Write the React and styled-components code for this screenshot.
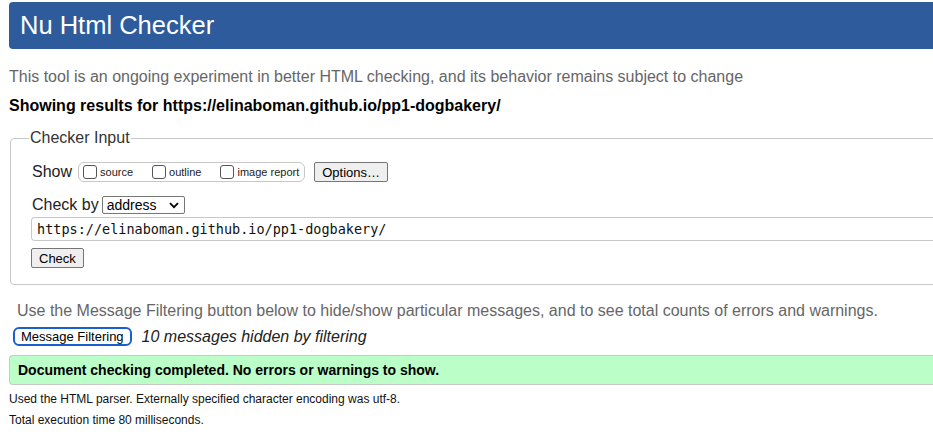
import React from "react";
import styled, { createGlobalStyle } from "styled-components";

const Global = createGlobalStyle`
  html, body { margin: 0; padding: 0; background: #fff; overflow: hidden; }
  body { font-family: "Liberation Sans", Arial, sans-serif; color: #000; }
`;

const Page = styled.div`
  width: 1000px;
  padding: 2px 0 0 9px;
  box-sizing: border-box;
`;

const Header = styled.header`
  background: #2d5b9b;
  border-radius: 4px;
  height: 47px;
  display: flex;
  align-items: center;
  padding-left: 11px;
`;

const Title = styled.h1`
  margin: 0;
  color: #fff;
  font-size: 25.5px;
  font-weight: normal;
`;

const Intro = styled.p`
  margin: 19px 0 0;
  font-size: 16px;
  color: #666;
  line-height: 18px;
`;

const Results = styled.p`
  margin: 11px 0 0;
  font-size: 16px;
  font-weight: bold;
  line-height: 18px;
`;

const Fieldset = styled.fieldset`
  margin: 14px 0 0 1px;
  border: 1px solid #c8c8c8;
  border-radius: 4px;
  padding: 0 0 16px 21px;
  min-width: 0;
`;

const Legend = styled.legend`
  font-size: 16px;
  color: #333;
  padding: 0 1px;
  margin-left: -3px;
`;

const Row = styled.div`
  display: flex;
  align-items: center;
  margin-top: ${(p) => p.$mt || 0}px;
  font-size: 16px;
  color: #222;
`;

const Label = styled.span`
  font-size: 16px;
`;

const OptionsGroup = styled.div`
  display: flex;
  align-items: center;
  border: 1px solid #c8c8c8;
  border-radius: 6px;
  height: 18px;
  padding: 0 5px 0 4px;
  gap: 19px;
  margin-left: 6px;
`;

const CheckLabel = styled.label`
  display: flex;
  align-items: center;
  font-size: 11px;
  color: #222;
`;

const Box = styled.span`
  width: 12px;
  height: 12px;
  border: 1px solid #555;
  border-radius: 3px;
  margin-right: 3px;
  background: #fff;
  display: inline-block;
`;

const Button = styled.button`
  font-family: "Liberation Sans", Arial, sans-serif;
  font-size: ${(p) => p.$fs || 13}px;
  color: #000;
  background: #efefef;
  border: 1px solid #767676;
  border-radius: 2px;
  height: ${(p) => p.$h || 20}px;
  padding: 0 ${(p) => p.$px || 6}px;
  margin-left: ${(p) => p.$ml || 0}px;
  line-height: 1;
`;

const FocusButton = styled(Button)`
  background: #fff;
  border: 2px solid #1a5fd0;
  border-radius: 6px;
  padding: 0 6px;
`;

const Select = styled.div`
  display: flex;
  align-items: center;
  justify-content: space-between;
  width: 83px;
  height: 18px;
  box-sizing: border-box;
  border: 1px solid #767676;
  border-radius: 2px;
  margin-left: 3px;
  padding: 0 5px 0 4px;
  font-size: 14px;
  color: #000;
`;

const UrlInput = styled.div`
  margin-top: 3px;
  margin-left: -1px;
  height: 24px;
  box-sizing: border-box;
  border: 1px solid #c8c8c8;
  border-right: none;
  border-radius: 4px 0 0 4px;
  display: flex;
  align-items: center;
  padding-left: 5px;
  font-family: "DejaVu Sans Mono", Menlo, monospace;
  font-size: 13.5px;
  color: #111;
`;

const Hint = styled.p`
  margin: 17px 0 0 8px;
  font-size: 16px;
  color: #666;
  line-height: 18px;
`;

const FilterRow = styled.div`
  display: flex;
  align-items: center;
  margin-top: 7px;
  margin-left: 4px;
`;

const Hidden = styled.em`
  font-size: 16px;
  color: #222;
  margin-left: 10px;
`;

const Success = styled.div`
  margin-top: 9px;
  background: #bbfec8;
  border: 1px solid #c8c8c8;
  border-right: none;
  border-radius: 4px 0 0 4px;
  height: 30px;
  box-sizing: border-box;
  display: flex;
  align-items: center;
  padding-left: 8px;
  font-size: 14px;
  font-weight: bold;
`;

const Small = styled.p`
  margin: ${(p) => p.$mt || 0}px 0 0;
  font-size: 12px;
  color: #111;
  line-height: 14px;
`;

function CheckOpt({ children }) {
  return (
    <CheckLabel>
      <Box />
      {children}
    </CheckLabel>
  );
}

export default function App() {
  return (
    <>
      <Global />
      <Page>
        <Header>
          <Title>Nu Html Checker</Title>
        </Header>
        <Intro>This tool is an ongoing experiment in better HTML checking, and its behavior remains subject to change</Intro>
        <Results>Showing results for https://elinaboman.github.io/pp1-dogbakery/</Results>
        <Fieldset>
          <Legend>Checker Input</Legend>
          <Row $mt={15}>
            <Label>Show</Label>
            <OptionsGroup>
              <CheckOpt>source</CheckOpt>
              <CheckOpt>outline</CheckOpt>
              <CheckOpt>image report</CheckOpt>
            </OptionsGroup>
            <Button $ml={9} $px={7}>Options…</Button>
          </Row>
          <Row $mt={14}>
            <Label>Check by</Label>
            <Select>
              <span>address</span>
              <svg width="10" height="7" viewBox="0 0 10 7">
                <path d="M1 1.2 L5 5.2 L9 1.2" fill="none" stroke="#000" strokeWidth="1.8" />
              </svg>
            </Select>
          </Row>
          <UrlInput>https://elinaboman.github.io/pp1-dogbakery/</UrlInput>
          <Row $mt={7}>
            <Button $ml={-1} $px={7}>Check</Button>
          </Row>
        </Fieldset>
        <Hint>Use the Message Filtering button below to hide/show particular messages, and to see total counts of errors and warnings.</Hint>
        <FilterRow>
          <FocusButton $h={19}>Message Filtering</FocusButton>
          <Hidden>10 messages hidden by filtering</Hidden>
        </FilterRow>
        <Success>Document checking completed. No errors or warnings to show.</Success>
        <Small $mt={7}>Used the HTML parser. Externally specified character encoding was utf-8.</Small>
        <Small $mt={7}>Total execution time 80 milliseconds.</Small>
      </Page>
    </>
  );
}
